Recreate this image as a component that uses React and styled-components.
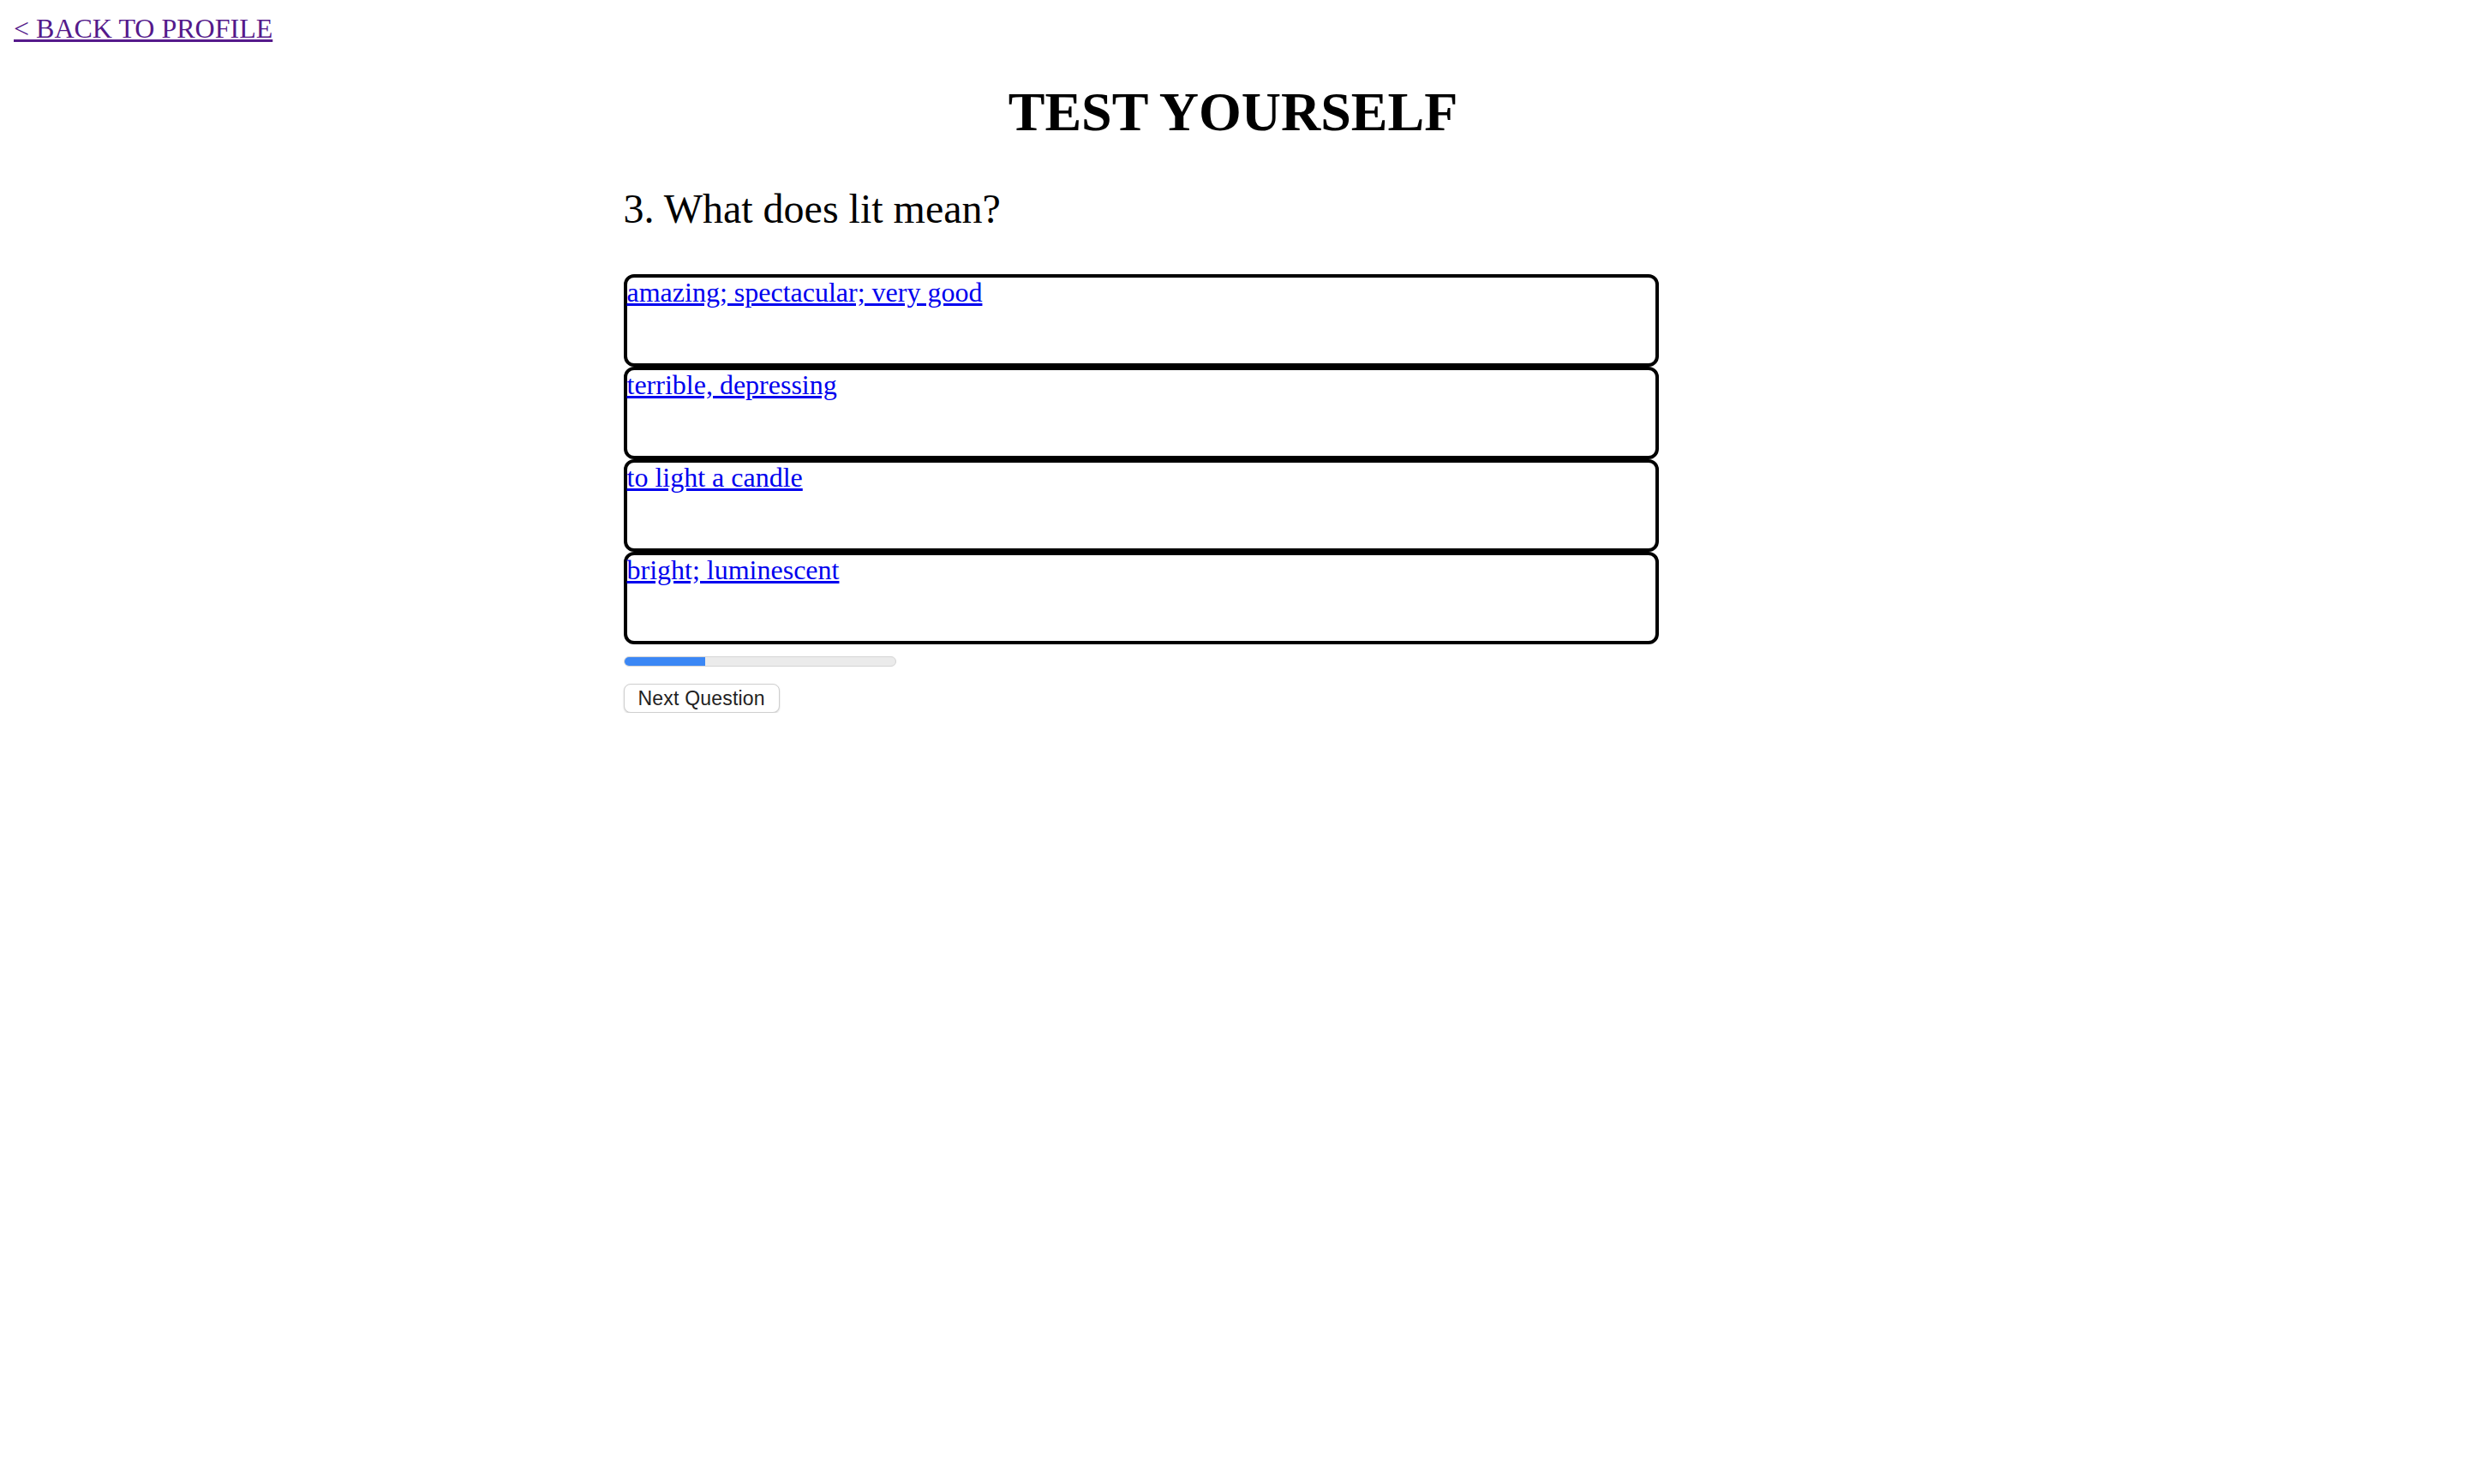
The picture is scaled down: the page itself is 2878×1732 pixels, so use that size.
import React from "react";
import styled, { createGlobalStyle } from "styled-components";

const GlobalStyle = createGlobalStyle`
  html, body {
    background: #ffffff;
  }
  body {
    margin: 16px;
    font-family: "Liberation Serif", "Times New Roman", serif;
    color: #000000;
  }
`;

const TopBar = styled.div`
  font-size: 32px;
  line-height: 34px;
`;

const BackLink = styled.a`
  color: #551a8b;
  text-decoration: underline;
  cursor: pointer;
`;

const Title = styled.h1`
  margin: 45px 0 0;
  font-size: 64px;
  line-height: 72px;
  font-weight: bold;
  text-align: center;
`;

const Quiz = styled.div`
  width: 50%;
  margin: 0 auto;
  display: flex;
  flex-direction: column;
  align-items: flex-start;
`;

const Question = styled.h2`
  margin: 50px 0 49px;
  font-size: 48px;
  line-height: 54px;
  font-weight: normal;
`;

const Answers = styled.div`
  display: flex;
  flex-direction: column;
`;

const AnswerBox = styled.div`
  width: 1200px;
  height: 100px;
  border: 4px solid #000000;
  border-radius: 12px;
  font-size: 32px;
  line-height: 34px;
`;

const AnswerLink = styled.a`
  color: #0000ee;
  text-decoration: underline;
  cursor: pointer;
`;

const Progress = styled.div`
  margin-top: 14px;
  width: 318px;
  height: 12px;
  box-sizing: border-box;
  border: 1px solid #d4d4d4;
  border-radius: 6px;
  background: #ebebeb;
  overflow: hidden;
`;

const ProgressFill = styled.div`
  height: 100%;
  background: #3b87f5;
`;

const NextButton = styled.button`
  margin-top: 20px;
  height: 34px;
  padding: 0 16px;
  background: #ffffff;
  border: 1px solid #cfcfcf;
  border-radius: 8px;
  box-shadow: 0 1px 2px rgba(0, 0, 0, 0.18);
  font-family: "Liberation Sans", Arial, sans-serif;
  font-size: 23px;
  letter-spacing: 0.2px;
  color: #222222;
  cursor: pointer;
`;

const answers = [
  "amazing; spectacular; very good",
  "terrible, depressing",
  "to light a candle",
  "bright; luminescent",
];

const App = () => {
  const current = 3;
  const total = 10;

  return (
    <>
      <GlobalStyle />
      <TopBar>
        <BackLink href="#">&lt; BACK TO PROFILE</BackLink>
      </TopBar>
      <Title>TEST YOURSELF</Title>
      <Quiz>
        <Question>{current}. What does lit mean?</Question>
        <Answers>
          {answers.map((a) => (
            <AnswerBox key={a}>
              <AnswerLink href="#">{a}</AnswerLink>
            </AnswerBox>
          ))}
        </Answers>
        <Progress>
          <ProgressFill style={{ width: `${(current / total) * 100}%` }} />
        </Progress>
        <NextButton>Next Question</NextButton>
      </Quiz>
    </>
  );
};

export default App;
